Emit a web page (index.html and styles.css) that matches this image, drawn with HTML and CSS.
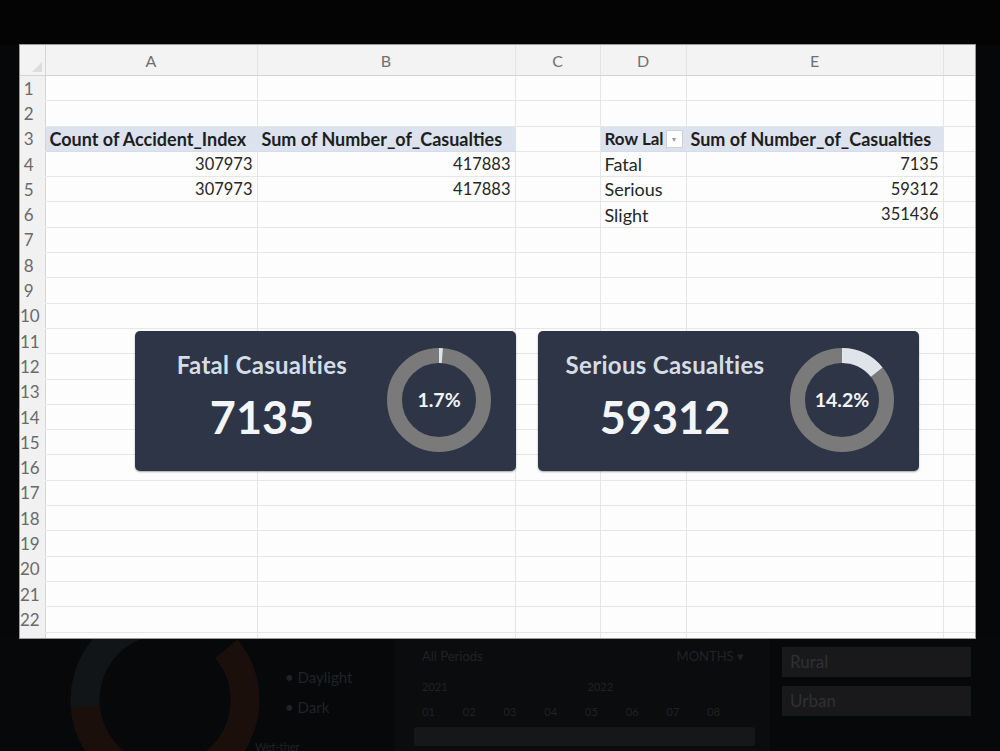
FILE: index.html
```html
<!DOCTYPE html>
<html lang="en">

<head>
    <meta charset="UTF-8">
    <meta name="viewport" content="width=device-width, initial-scale=1.0">
    <title>Accident Casualties - Pivot</title>
    <link rel="stylesheet" href="styles.css">
</head>

<body>
    <div class="screen">
        <div class="backdrop-top"></div>

        <!-- spreadsheet window -->
        <div class="sheet">
            <table class="grid">
                <colgroup>
                    <col class="c-row">
                    <col class="c-a">
                    <col class="c-b">
                    <col class="c-c">
                    <col class="c-d">
                    <col class="c-e">
                    <col class="c-f">
                </colgroup>
                <thead>
                    <tr>
                        <th class="corner"><span class="corner-mark"></span></th>
                        <th>A</th>
                        <th>B</th>
                        <th>C</th>
                        <th>D</th>
                        <th>E</th>
                        <th></th>
                    </tr>
                </thead>
                <tbody>
                    <tr><th>1</th><td></td><td></td><td></td><td></td><td></td><td></td></tr>
                    <tr><th>2</th><td></td><td></td><td></td><td></td><td></td><td></td></tr>
                    <tr class="pivot-row">
                        <th>3</th>
                        <td class="pv-head">Count of Accident_Index</td>
                        <td class="pv-head">Sum of Number_of_Casualties</td>
                        <td></td>
                        <td class="pv-head">
                            <div class="row-labels">
                                <span class="row-labels-text">Row Lal</span>
                                <span class="filter-btn">&#9662;</span>
                            </div>
                        </td>
                        <td class="pv-head">Sum of Number_of_Casualties</td>
                        <td></td>
                    </tr>
                    <tr><th>4</th><td class="num">307973</td><td class="num">417883</td><td></td><td>Fatal</td><td class="num">7135</td><td></td></tr>
                    <tr><th>5</th><td class="num">307973</td><td class="num">417883</td><td></td><td>Serious</td><td class="num">59312</td><td></td></tr>
                    <tr><th>6</th><td></td><td></td><td></td><td>Slight</td><td class="num">351436</td><td></td></tr>
                    <tr><th>7</th><td></td><td></td><td></td><td></td><td></td><td></td></tr>
                    <tr><th>8</th><td></td><td></td><td></td><td></td><td></td><td></td></tr>
                    <tr><th>9</th><td></td><td></td><td></td><td></td><td></td><td></td></tr>
                    <tr><th>10</th><td></td><td></td><td></td><td></td><td></td><td></td></tr>
                    <tr><th>11</th><td></td><td></td><td></td><td></td><td></td><td></td></tr>
                    <tr><th>12</th><td></td><td></td><td></td><td></td><td></td><td></td></tr>
                    <tr><th>13</th><td></td><td></td><td></td><td></td><td></td><td></td></tr>
                    <tr><th>14</th><td></td><td></td><td></td><td></td><td></td><td></td></tr>
                    <tr><th>15</th><td></td><td></td><td></td><td></td><td></td><td></td></tr>
                    <tr><th>16</th><td></td><td></td><td></td><td></td><td></td><td></td></tr>
                    <tr><th>17</th><td></td><td></td><td></td><td></td><td></td><td></td></tr>
                    <tr><th>18</th><td></td><td></td><td></td><td></td><td></td><td></td></tr>
                    <tr><th>19</th><td></td><td></td><td></td><td></td><td></td><td></td></tr>
                    <tr><th>20</th><td></td><td></td><td></td><td></td><td></td><td></td></tr>
                    <tr><th>21</th><td></td><td></td><td></td><td></td><td></td><td></td></tr>
                    <tr><th>22</th><td></td><td></td><td></td><td></td><td></td><td></td></tr>
                    <tr class="row-cut"><th></th><td></td><td></td><td></td><td></td><td></td><td></td></tr>
                </tbody>
            </table>

            <!-- KPI cards floating over the sheet -->
            <div class="card card-fatal">
                <div class="card-text">
                    <div class="card-title">Fatal Casualties</div>
                    <div class="card-value">7135</div>
                </div>
                <div class="donut">
                    <svg width="104" height="104" viewBox="0 0 104 104">
                        <circle class="ring" cx="52" cy="52" r="44.5"></circle>
                        <circle class="ring-part" cx="52" cy="52" r="44.5"
                            stroke-dasharray="3.4 300" transform="rotate(-90 52 52)"></circle>
                    </svg>
                    <span class="donut-label">1.7%</span>
                </div>
            </div>

            <div class="card card-serious">
                <div class="card-text">
                    <div class="card-title">Serious Casualties</div>
                    <div class="card-value">59312</div>
                </div>
                <div class="donut">
                    <svg width="104" height="104" viewBox="0 0 104 104">
                        <circle class="ring" cx="52" cy="52" r="44.5"></circle>
                        <circle class="ring-part" cx="52" cy="52" r="44.5"
                            stroke-dasharray="39.7 300" transform="rotate(-90 52 52)"></circle>
                    </svg>
                    <span class="donut-label">14.2%</span>
                </div>
            </div>
        </div>

        <!-- dashboard behind the window (dimmed) -->
        <div class="backdrop-bottom">
            <div class="bg-donut">
                <svg width="285" height="113" viewBox="0 0 285 113">
                    <circle cx="165" cy="62" r="80" fill="none" stroke="#121518" stroke-width="29"
                        stroke-dasharray="150 600" transform="rotate(150 165 62)"></circle>
                    <circle cx="165" cy="62" r="80" fill="none" stroke="#1b0f0c" stroke-width="29"
                        stroke-dasharray="300 600" transform="rotate(-40 165 62)"></circle>
                </svg>
            </div>
            <div class="bg-legend">
                <span>&#8226; Daylight</span>
                <span>&#8226; Dark</span>
                <span class="bg-legend-foot">Wet-ther</span>
            </div>
            <div class="bg-periods">
                <div class="bg-periods-head">
                    <span>All Periods</span>
                    <span>MONTHS &#9662;</span>
                </div>
                <div class="bg-years">
                    <span>2021</span>
                    <span>2022</span>
                </div>
                <div class="bg-months">
                    <span>01</span><span>02</span><span>03</span><span>04</span>
                    <span>05</span><span>06</span><span>07</span><span>08</span>
                </div>
                <div class="bg-bar"></div>
            </div>
            <div class="bg-slicer">
                <div class="bg-slicer-item">Rural</div>
                <div class="bg-slicer-item">Urban</div>
            </div>
        </div>
    </div>
</body>

</html>
```

FILE: styles.css
```css
html,
body {
    margin: 0;
    padding: 0;
}

body {
    background-color: #060708;
    font-family: Lato, "Open Sans", Arial, sans-serif;
    width: 1000px;
    height: 751px;
    overflow: hidden;
}

.screen {
    display: flex;
    flex-direction: column;
    height: 751px;
}

.backdrop-top {
    height: 45px;
    flex-shrink: 0;
    background-color: #040405;
}

/* 表格窗口 */
.sheet {
    position: relative;
    width: 955px;
    height: 593px;
    margin-left: 20px;
    flex-shrink: 0;
    overflow: hidden;
    background-color: #fdfdfd;
    box-shadow: 0 0 0 1px #9a9a9a;
}

.grid {
    border-collapse: collapse;
    table-layout: fixed;
    width: 955px;
    font-size: 18px;
    color: #262626;
}

.c-row { width: 25px; }
.c-a { width: 212px; }
.c-b { width: 258px; }
.c-c { width: 85px; }
.c-d { width: 86px; }
.c-e { width: 257px; }
.c-f { width: 32px; }

.grid thead th {
    height: 30px;
    padding: 0;
    background-color: #f3f3f3;
    color: #707070;
    font-weight: normal;
    font-size: 16px;
    border-bottom: 1px solid #d4d4d4;
    border-right: 1px solid #e4e4e4;
}

.grid thead th.corner {
    position: relative;
    border-right: 1px solid #d4d4d4;
}

.corner-mark {
    position: absolute;
    right: 3px;
    bottom: 3px;
    width: 0;
    height: 0;
    border-left: 10px solid transparent;
    border-bottom: 10px solid #dcdcdc;
}

.grid tbody tr {
    height: 25.3px;
}

.grid tbody th {
    padding: 0 7px 0 0;
    background-color: #f1f1f1;
    color: #6a6a6a;
    font-weight: normal;
    font-size: 17px;
    text-align: center;
    white-space: nowrap;
    border-right: 1px solid #d4d4d4;
    border-bottom: 1px solid #f1f1f1;
}

.grid td {
    padding: 0 4px;
    white-space: nowrap;
    overflow: hidden;
    border-right: 1px solid #e6e6e6;
    border-bottom: 1px solid #e6e6e6;
    line-height: 1;
}

.grid td.num {
    text-align: right;
    font-size: 16.5px;
}

.grid td.pv-head {
    background-color: #dde3ee;
    font-weight: bold;
    color: #1e1e1e;
    border-right-color: #dde3ee;
    border-bottom-color: #d6ddea;
}

.row-labels {
    display: flex;
    align-items: center;
    gap: 2px;
}

.row-labels-text {
    flex: 1;
    font-size: 17px;
}

.filter-btn {
    width: 15px;
    height: 16px;
    flex-shrink: 0;
    margin-right: -1px;
    background-color: #ffffff;
    border: 1px solid #d0d0d0;
    color: #999;
    font-size: 8px;
    line-height: 16px;
    text-align: center;
    font-weight: normal;
}

/* KPI 卡片 */
.card {
    position: absolute;
    top: 286px;
    width: 381px;
    height: 140px;
    box-sizing: border-box;
    display: flex;
    align-items: flex-start;
    background-color: #2d3546;
    border-radius: 5px;
    box-shadow: 0 1px 2px rgba(0, 0, 0, 0.35);
}

.card-fatal {
    left: 115px;
}

.card-serious {
    left: 518px;
}

.card-text {
    width: 254px;
    display: flex;
    flex-direction: column;
    align-items: center;
    padding-top: 18px;
}

.card-title {
    font-size: 24px;
    font-weight: bold;
    letter-spacing: 0.3px;
    color: #d6dce5;
    line-height: 32px;
}

.card-value {
    margin-top: 8px;
    font-size: 45px;
    font-weight: bold;
    color: #f3f5f9;
    line-height: 56px;
}

.donut {
    position: relative;
    width: 104px;
    height: 104px;
    margin-top: 17px;
    margin-left: -2px;
}

.donut svg {
    display: block;
}

.ring {
    fill: none;
    stroke: #7a7a7a;
    stroke-width: 15;
}

.ring-part {
    fill: none;
    stroke: #dfe3ea;
    stroke-width: 15;
}

.donut-label {
    position: absolute;
    inset: 0;
    display: flex;
    align-items: center;
    justify-content: center;
    font-size: 19.5px;
    font-weight: bold;
    color: #f3f5f9;
    padding-bottom: 2px;
    box-sizing: border-box;
}

/* 背景仪表盘（暗） */
.backdrop-bottom {
    flex: 1;
    display: flex;
    background-color: #07080a;
    color: #202327;
    font-size: 13px;
}

.bg-donut {
    width: 285px;
    flex-shrink: 0;
}

.bg-donut svg {
    display: block;
}

.bg-legend {
    width: 110px;
    display: flex;
    flex-direction: column;
    padding-top: 30px;
    gap: 12px;
    font-size: 15px;
}

.bg-legend-foot {
    margin-top: 12px;
    margin-left: -30px;
    font-size: 11px;
}

.bg-periods {
    width: 375px;
    background-color: #0b0c0e;
    padding: 10px 14px 0 27px;
    box-sizing: border-box;
    display: flex;
    flex-direction: column;
}

.bg-periods-head {
    display: flex;
    justify-content: space-between;
    padding-right: 12px;
    font-size: 13px;
}

.bg-years {
    display: flex;
    gap: 140px;
    margin-top: 16px;
    font-size: 11px;
}

.bg-months {
    display: flex;
    gap: 28px;
    margin-top: 12px;
    font-size: 11px;
}

.bg-bar {
    height: 19px;
    margin: 9px 0 0 -8px;
    width: 341px;
    background-color: #161719;
    border-radius: 3px;
}

.bg-slicer {
    display: flex;
    flex-direction: column;
    gap: 9px;
    padding: 9px 0 0 12px;
}

.bg-slicer-item {
    width: 189px;
    height: 30px;
    background-color: #19191b;
    color: #2f3135;
    font-size: 17px;
    line-height: 30px;
    padding-left: 8px;
    box-sizing: border-box;
}
```
